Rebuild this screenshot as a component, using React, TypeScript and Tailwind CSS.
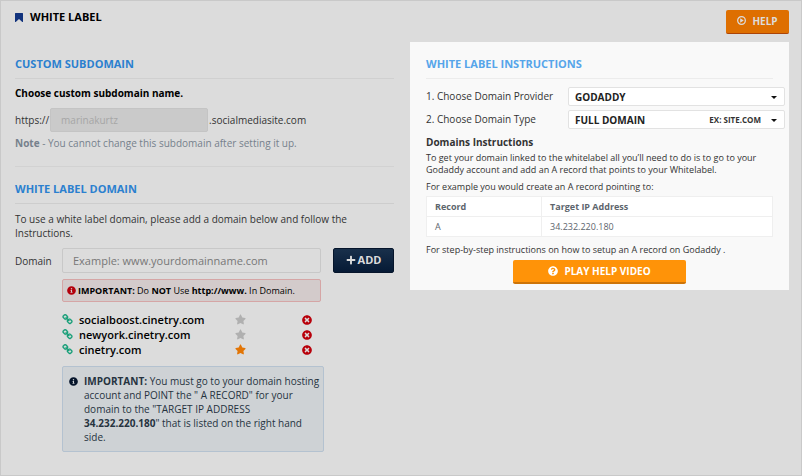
import type { ReactNode } from "react";
import { FaInfoCircle, FaPlus, FaQuestionCircle, FaStar, FaTimesCircle } from "react-icons/fa";

const domains = [
  { name: "socialboost.cinetry.com", primary: false },
  { name: "newyork.cinetry.com", primary: false },
  { name: "cinetry.com", primary: true },
];

function ChainIcon() {
  return (
    <svg
      viewBox="0 0 1792 1792"
      className="size-[11px] shrink-0 fill-[#169f78] stroke-[#169f78] stroke-[50]"
      aria-hidden="true"
    >
      <path d="M1520 1216q0-40-28-68l-208-208q-28-28-68-28-42 0-72 32 3 3 19 18.5t21.5 21.5 15 19 13 25.5 3.5 27.5q0 40-28 68t-68 28q-15 0-27.5-3.5t-25.5-13-19-15-21.5-21.5-18.5-19q-33 31-33 73 0 40 28 68l206 207q27 27 68 27 40 0 68-26l147-146q28-28 28-67zm-703-705q0-40-28-68l-206-207q-28-28-68-28-39 0-68 27l-147 146q-28 28-28 67 0 40 28 68l208 208q27 27 68 27 42 0 72-31-3-3-19-18.5t-21.5-21.5-15-19-13-25.5-3.5-27.5q0-40 28-68t68-28q15 0 27.5 3.5t25.5 13 19 15 21.5 21.5 18.5 19q33-31 33-73zm895 705q0 120-85 203l-147 146q-83 83-203 83-121 0-204-85l-206-207q-83-83-83-203 0-123 88-209l-88-88q-86 88-208 88-120 0-204-84l-208-208q-84-84-84-204t85-203l147-146q83-83 203-83 121 0 204 85l206 207q83 83 83 203 0 123-88 209l88 88q86-88 208-88 120 0 204 84l208 208q84 84 84 204z" />
    </svg>
  );
}

function PlayIcon() {
  return (
    <svg viewBox="0 0 24 24" className="size-[9px] shrink-0 fill-current" aria-hidden="true">
      <circle cx="12" cy="12" r="10.2" fill="none" stroke="currentColor" strokeWidth="3.4" />
      <path d="M8.5 6.3v11.4L18 12z" />
    </svg>
  );
}

function BookmarkIcon() {
  return (
    <svg viewBox="0 0 16 18" className="h-[9px] w-2 shrink-0 fill-[#12337d]" aria-hidden="true">
      <path d="M1 0h14q1 0 1 1v16q0 1-1 1-.6 0-1-.5L8 12l-6 5.5q-.4.5-1 .5-1 0-1-1V1q0-1 1-1z" />
    </svg>
  );
}

function SelectRow({ id, label, value, hint }: { id: string; label: string; value: string; hint?: string }) {
  return (
    <div className="flex items-center">
      <label htmlFor={id} className="flex-1 pb-0.5">
        {label}
      </label>
      <div className="relative w-[217px]">
        <select
          id={id}
          className="block h-[19px] w-full appearance-none rounded-xs border border-[#e2e2e2] bg-white px-1.5 text-[10px] font-bold text-[#222]"
        >
          <option>{value}</option>
        </select>
        {hint && (
          <span className="pointer-events-none absolute inset-y-0 right-6 flex items-center text-[8px] font-bold text-[#333]">
            {hint}
          </span>
        )}
        <svg
          viewBox="0 0 6 3"
          className="pointer-events-none absolute top-2 right-2 mt-px h-[3px] w-1.5 fill-[#111]"
          aria-hidden="true"
        >
          <path d="M0 0h6L3 3z" />
        </svg>
      </div>
    </div>
  );
}

function SectionTitle({ children, className }: { children: ReactNode; className: string }) {
  return <h2 className={`border-b pb-1.5 text-[11px] leading-4 font-bold ${className}`}>{children}</h2>;
}

export default function App() {
  return (
    <div className="min-h-screen border border-[#c9c9c9] bg-[#dcdcdc] pr-3 pb-5 pl-3.5 font-['Open_Sans',sans-serif] text-[10px] leading-[14px] text-[#333]">
      {/* Page header */}
      <header className="flex items-start justify-between pt-[9px]">
        <h1 className="flex items-center gap-[7px] text-[11px] leading-[14px] font-bold text-black">
          <BookmarkIcon />
          WHITE LABEL
        </h1>
        <button
          type="button"
          className="flex h-6 w-[63px] items-center justify-center gap-1.5 rounded-xs border-b border-[#ab4407] bg-[#de6f00] pb-0.5 text-[10px] font-bold text-[#dcdcdc]"
        >
          <PlayIcon />
          HELP
        </button>
      </header>

      <div className="mt-2 grid grid-cols-2 items-start gap-4">
        <main>
          {/* Custom subdomain */}
          <section className="border-b border-[#d2d2d2] pt-3.5 pb-4">
            <SectionTitle className="border-[#d0d0d0] text-[#2b80cf]">CUSTOM SUBDOMAIN</SectionTitle>
            <p className="mt-[7px] font-bold text-black">Choose custom subdomain name.</p>
            <div className="mt-2 flex items-center gap-px">
              <label htmlFor="subdomain">https://</label>
              <input
                id="subdomain"
                disabled
                value="marinakurtz"
                className="h-6 w-[158px] rounded-xs border border-[#c4c4c4] bg-[#cacaca] px-2.5 text-[#a6a6a6]"
              />
              <span>.socialmediasite.com</span>
            </div>
            <p className="mt-1 text-[#76818c]">
              <b>Note</b> - You cannot change this subdomain after setting it up.
            </p>
          </section>

          {/* White label domain */}
          <section className="pt-3.5">
            <SectionTitle className="border-[#cdcdcd] text-[#2b80cf]">WHITE LABEL DOMAIN</SectionTitle>
            <p className="mt-2 pr-10">
              To use a white label domain, please add a domain below and follow the Instructions.
            </p>
            <div className="mt-2 flex items-center">
              <label htmlFor="domain" className="w-[47px]">
                Domain
              </label>
              <input
                id="domain"
                placeholder="Example: www.yourdomainname.com"
                className="h-[25px] min-w-0 flex-1 rounded-xs border border-[#c8c8c8] bg-[#dcdcdc] px-2.5 text-[11px] placeholder:text-[#777]"
              />
              <button
                type="button"
                className="ml-3 flex h-[25px] w-[61px] items-center justify-center gap-0.5 rounded-xs border border-[#06152b] bg-linear-to-b from-[#19304b] to-[#061a35] pb-0.5 text-[11px] font-bold text-[#dcdcdc]"
              >
                <FaPlus className="size-2.5" />
                ADD
              </button>
            </div>

            <div className="ml-[47px]">
              <p className="mt-1.5 mr-[73px] flex h-[23px] items-center gap-0.5 rounded-xs border border-[#d5a5a5] bg-[#d3cbcb] px-1 text-[9px] text-black">
                <FaInfoCircle className="size-[9px] shrink-0 text-[#b3000c]" />
                <span>
                  <b>IMPORTANT:</b> Do <b>NOT</b> Use <b>http://www.</b> In Domain.
                </span>
              </p>
              <ul className="mt-2.5 text-[11px] leading-[15px] font-semibold text-black">
                {domains.map((domain) => (
                  <li key={domain.name} className="flex h-[15px] items-center">
                    <ChainIcon />
                    <span className="ml-1.5 w-[156px]">{domain.name}</span>
                    <button type="button" aria-label={`Make ${domain.name} primary`}>
                      <FaStar className={domain.primary ? "size-[11px] text-[#e27506]" : "size-[11px] text-[#b0b0b0]"} />
                    </button>
                    <button type="button" aria-label={`Remove ${domain.name}`} className="ml-14">
                      <FaTimesCircle className="size-2.5 text-[#b8000b]" />
                    </button>
                  </li>
                ))}
              </ul>
              <div className="mt-[9px] flex w-[262px] gap-1.5 rounded-xs border border-[#b4c2d0] bg-[#ced2d5] py-[7px] pl-1.5 text-[#26333f]">
                <FaInfoCircle className="mt-[3px] size-[9px] shrink-0 text-[#06152b]" />
                <p>
                  <b>IMPORTANT:</b> You must go to your domain hosting account and POINT the " A RECORD" for your domain
                  to the "TARGET IP ADDRESS <b>34.232.220.180</b>" that is listed on the right hand side.
                </p>
              </div>
            </div>
          </section>
        </main>

        {/* Instructions */}
        <aside className="bg-[#f9f9f9] px-4 pt-3.5 pb-1.5 leading-3">
          <SectionTitle className="border-[#ececec] text-[#56a5ea]">WHITE LABEL INSTRUCTIONS</SectionTitle>
          <div className="mt-2 -mr-3 space-y-1">
            <SelectRow id="provider" label="1. Choose Domain Provider" value="GODADDY" />
            <SelectRow id="type" label="2. Choose Domain Type" value="FULL DOMAIN" hint="EX: SITE.COM" />
          </div>
          <h3 className="mt-[7px] font-bold">Domains Instructions</h3>
          <p className="mt-1 text-[9px]">
            To get your domain linked to the whitelabel all you’ll need to do is to go to your Godaddy account and add
            an A record that points to your Whitelabel.
          </p>
          <p className="mt-[5px] text-[9px]">For example you would create an A record pointing to:</p>
          <table className="mt-[3px] w-full border-collapse bg-white text-left text-[9px] text-[#5d656d]">
            <thead>
              <tr className="h-5">
                <th className="w-[115px] border border-[#efefef] px-2 py-0">Record</th>
                <th className="border border-[#efefef] px-2 py-0">Target IP Address</th>
              </tr>
            </thead>
            <tbody>
              <tr className="h-5">
                <td className="border border-[#efefef] px-2 py-0">A</td>
                <td className="border border-[#efefef] px-2 py-0">34.232.220.180</td>
              </tr>
            </tbody>
          </table>
          <p className="mt-[7px] text-[9px]">For step-by-step instructions on how to setup an A record on Godaddy .</p>
          <button
            type="button"
            className="mx-auto mt-1 flex h-6 w-[173px] items-center justify-center gap-1.5 rounded-xs border-b-2 border-[#cd7408] bg-[#ff9308] text-[10px] font-bold text-white"
          >
            <FaQuestionCircle className="size-2.5" />
            PLAY HELP VIDEO
          </button>
        </aside>
      </div>
    </div>
  );
}
